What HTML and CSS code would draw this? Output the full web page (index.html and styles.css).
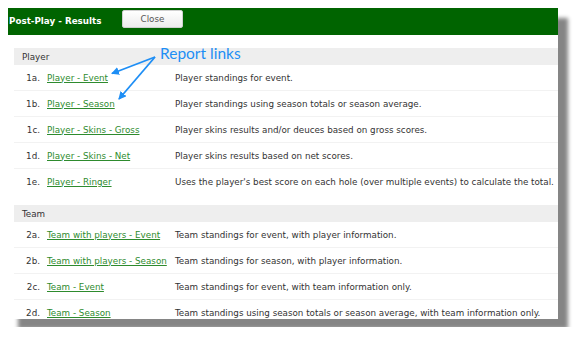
FILE: index.html
```html
<!DOCTYPE html>
<html>
<head>
<meta charset="utf-8">
<link rel="stylesheet" href="styles.css">
</head>
<body>
<div class="window">
  <div class="titlebar">
    <span class="title">Post-Play - Results</span>
    <button class="close">Close</button>
  </div>
  <div class="content">
    <div class="section">
      <div class="section-head">Player</div>
      <div class="row"><span class="num">1a.</span><a class="link" href="#">Player - Event</a><span class="desc">Player standings for event.</span></div>
      <div class="row"><span class="num">1b.</span><a class="link" href="#">Player - Season</a><span class="desc">Player standings using season totals or season average.</span></div>
      <div class="row"><span class="num">1c.</span><a class="link" href="#">Player - Skins - Gross</a><span class="desc">Player skins results and/or deuces based on gross scores.</span></div>
      <div class="row"><span class="num">1d.</span><a class="link" href="#">Player - Skins - Net</a><span class="desc">Player skins results based on net scores.</span></div>
      <div class="row"><span class="num">1e.</span><a class="link" href="#">Player - Ringer</a><span class="desc">Uses the player's best score on each hole (over multiple events) to calculate the total.</span></div>
    </div>
    <div class="section">
      <div class="section-head">Team</div>
      <div class="row"><span class="num">2a.</span><a class="link" href="#">Team with players - Event</a><span class="desc">Team standings for event, with player information.</span></div>
      <div class="row"><span class="num">2b.</span><a class="link" href="#">Team with players - Season</a><span class="desc">Team standings for season, with player information.</span></div>
      <div class="row"><span class="num">2c.</span><a class="link" href="#">Team - Event</a><span class="desc">Team standings for event, with team information only.</span></div>
      <div class="row"><span class="num">2d.</span><a class="link" href="#">Team - Season</a><span class="desc">Team standings using season totals or season average, with team information only.</span></div>
    </div>
  </div>
</div>
<div class="callout">Report links</div>
<svg class="arrows" width="579" height="341" viewBox="0 0 579 341">
  <defs>
    <marker id="ah" markerWidth="8" markerHeight="8" refX="7" refY="4" orient="auto" markerUnits="userSpaceOnUse">
      <path d="M0,0 L8,4 L0,8 Z" fill="#1e8ef5"/>
    </marker>
  </defs>
  <line x1="155" y1="57" x2="112" y2="73.5" stroke="#1e8ef5" stroke-width="1.8" marker-end="url(#ah)"/>
  <line x1="155" y1="57" x2="119" y2="99" stroke="#1e8ef5" stroke-width="1.8" marker-end="url(#ah)"/>
</svg>
</body>
</html>
```
FILE: styles.css
```css
html, body {
  margin: 0;
  padding: 0;
  background: #fff;
}
body {
  padding: 8px;
  font-family: "DejaVu Sans", Verdana, sans-serif;
  font-size: 8.75px;
  color: #333;
}
.window {
  width: 550px;
  height: 311px;
  overflow: hidden;
  background: #fff;
  box-shadow: 10px 10px 4px rgba(0, 0, 0, 0.48);
}
.titlebar {
  height: 27px;
  background: #006400;
  display: flex;
  align-items: flex-start;
}
.title {
  color: #fff;
  font-weight: bold;
  margin-left: 1px;
  margin-top: 8px;
  width: 113px;
}
.close {
  margin-top: 2px;
  width: 61px;
  height: 18px;
  padding: 0;
  border: 1px solid #d0d0d0;
  border-radius: 2px;
  background: linear-gradient(#ffffff, #ececec);
  font-family: "DejaVu Sans", Verdana, sans-serif;
  font-size: 8.75px;
  color: #555;
}
.content {
  padding: 13px 0 0 6px;
}
.section {
  margin-bottom: 10px;
}
.section-head {
  height: 17px;
  background: #eeeeee;
  display: flex;
  align-items: center;
  padding-left: 8px;
  color: #333;
}
.row {
  height: 25px;
  display: flex;
  align-items: center;
  border-bottom: 1px solid #f2f2f2;
}
.row:last-child {
  border-bottom-color: transparent;
}
.num {
  width: 26px;
  text-align: right;
  padding-right: 7px;
  flex: none;
}
.link {
  width: 128px;
  flex: none;
  color: #2e8b2e;
  text-decoration: underline;
  white-space: nowrap;
}
.desc {
  white-space: nowrap;
}
.callout {
  position: absolute;
  left: 160px;
  top: 44px;
  font-family: Lato, "Liberation Sans", sans-serif;
  font-size: 15.5px;
  color: #1e8ef5;
}
.arrows {
  position: absolute;
  left: 0;
  top: 0;
  pointer-events: none;
}
```
